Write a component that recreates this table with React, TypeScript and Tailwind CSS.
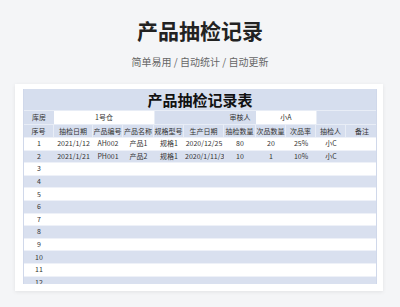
import React from "react";

const cols = "grid grid-cols-[30px_39px_30px_31px_30px_40px_32px_30px_30px_30px_32px]";
const headers = ["序号", "抽检日期", "产品编号", "产品名称", "规格型号", "生产日期", "抽检数量", "次品数量", "次品率", "抽检人", "备注"];
const data: string[][] = [
  ["1", "2021/1/12", "AH002", "产品1", "规格1", "2020/12/25", "80", "20", "25%", "小C", ""],
  ["2", "2021/1/21", "PH001", "产品2", "规格1", "2020/1/11/30", "10", "1", "10%", "小C", ""],
];

export default function App() {
  const rows: string[][] = [...data];
  for (let i = 3; i <= 12; i++) rows.push([String(i), "", "", "", "", "", "", "", "", "", ""]);
  return (
    <div
      className="w-[400px] h-[307px] bg-[#f4f5f7] overflow-hidden flex flex-col"
      style={{ fontFamily: '"Noto Sans CJK SC", "Noto Sans", sans-serif' }}
    >
      <div className="pt-[17px] flex justify-center">
        <span className="text-[21px] leading-[26px] font-bold text-[#222]">产品抽检记录</span>
      </div>
      <div className="mt-[12px] flex justify-center text-[10px] leading-[14px] text-[#666]">
        简单易用 / 自动统计 / 自动更新
      </div>
      <div className="ml-[15px] mt-[15px] w-[368px] h-[207px] bg-white shadow-[0_1px_4px_rgba(0,0,0,0.08)] pl-[8px] pt-[5px]">
        <div className="w-[354px] h-[195px] overflow-hidden border-l border-r border-[#d0d8ea] text-[7px] text-[#333]">
          <div className="h-[21px] bg-[#d6deee] flex items-center justify-center text-[15px] font-bold text-[#111] leading-none">
            产品抽检记录表
          </div>
          <div className={`${cols} h-[14px] bg-[#d6deee] border-t border-[#e8edf6]`}>
            <div className="flex items-center justify-center">库房</div>
            <div className="col-span-3 bg-white flex items-center justify-center">1号仓</div>
            <div className="col-span-2 border-l border-[#e8edf6]"></div>
            <div className="flex items-center justify-center">审核人</div>
            <div className="col-span-2 bg-white flex items-center justify-center">小A</div>
            <div className="col-span-2 border-l border-[#e8edf6]"></div>
          </div>
          <div className={`${cols} h-[13px] bg-[#d6deee] border-t border-[#e8edf6]`}>
            {headers.map((h, i) => (
              <div
                key={i}
                className="flex items-center justify-center border-r border-[#e8edf6] last:border-r-0 whitespace-nowrap overflow-hidden"
              >
                {h}
              </div>
            ))}
          </div>
          {rows.map((r, ri) => (
            <div
              key={ri}
              className={`${cols} h-[12.6px] ${ri % 2 === 1 ? "bg-[#d9e0ef]" : "bg-white"} border-t border-[#eef1f8]`}
            >
              {r.map((c, ci) => (
                <div
                  key={ci}
                  className={`flex items-center whitespace-nowrap overflow-hidden leading-none ${
                    c.length > 10 ? "justify-start pl-[1px]" : "justify-center"
                  }`}
                >
                  {c}
                </div>
              ))}
            </div>
          ))}
        </div>
      </div>
    </div>
  );
}
